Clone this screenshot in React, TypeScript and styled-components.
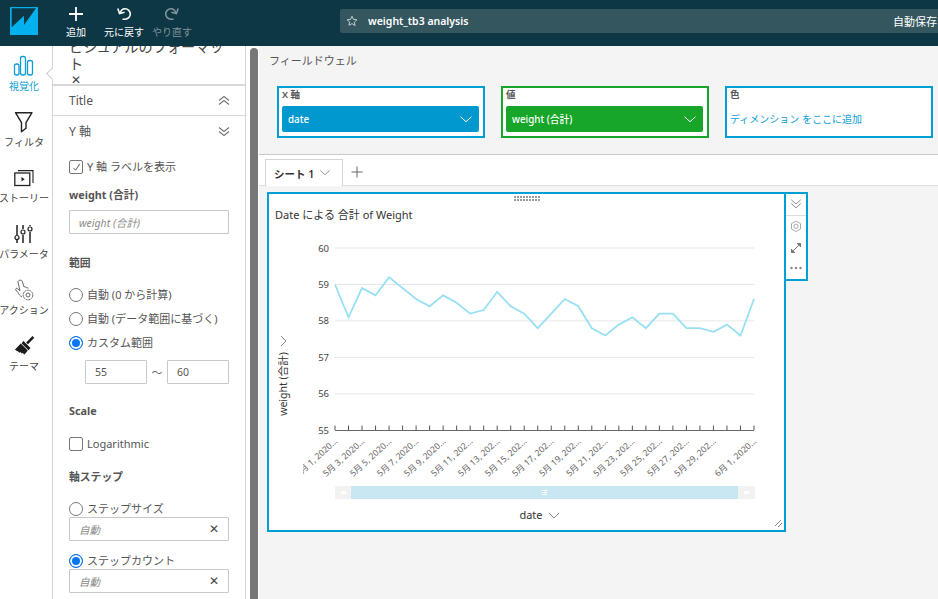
import React from "react";
import styled, { createGlobalStyle } from "styled-components";

const Global = createGlobalStyle`
  html, body { margin: 0; padding: 0; height: 100%; overflow: hidden; background: #fff; }
  #root { height: 100%; }
  * { box-sizing: border-box; }
  body { font-family: "Noto Sans", "Noto Sans CJK JP", sans-serif; color: #555; }
`;

const Page = styled.div`
  width: 938px;
  height: 599px;
  display: flex;
  flex-direction: column;
  overflow: hidden;
`;

/* ---------- top bar ---------- */
const TopBar = styled.header`
  flex: 0 0 46px;
  height: 46px;
  background: #0e3745;
  display: flex;
  align-items: flex-start;
  position: relative;
  z-index: 2;
`;
const Logo = styled.svg`
  width: 28px;
  height: 28px;
  margin: 7px 14px 0 10px;
  flex: none;
`;
const ToolGroup = styled.div`
  display: flex;
  flex: none;
`;
const ToolButton = styled.button<{ $off?: boolean }>`
  all: unset;
  box-sizing: border-box;
  width: 48px;
  height: 46px;
  display: flex;
  flex-direction: column;
  align-items: center;
  padding-top: 5px;
  color: ${(p) => (p.$off ? "#7f959c" : "#fff")};
  font-size: 10px;
  line-height: 14px;
  white-space: nowrap;
  svg { display: block; margin-bottom: 2px; }
`;
const TitleBar = styled.div`
  margin: 9px 0 0 144px;
  width: 598px;
  height: 24px;
  background: #33565f;
  border-radius: 2px 0 0 2px;
  display: flex;
  align-items: center;
  padding-left: 6px;
  color: #fff;
`;
const TitleName = styled.span`
  margin-left: 10px;
  flex: 1;
  font-size: 10.5px;
  font-weight: 600;
`;
const SaveState = styled.span`
  flex: 0 0 45px;
  font-size: 11px;
  white-space: nowrap;
  overflow: hidden;
`;

/* ---------- work area ---------- */
const Work = styled.div`
  flex: 1;
  display: flex;
  min-height: 0;
`;
const Rail = styled.nav`
  flex: 0 0 52px;
  padding: 8px 4px 0 0;
  position: relative;
  z-index: 1;
`;
const RailItem = styled.div<{ $active?: boolean }>`
  width: 48px;
  height: 56px;
  display: flex;
  flex-direction: column;
  align-items: center;
  position: relative;
  color: ${(p) => (p.$active ? "#0d9ed6" : "#444")};
  ${(p) =>
    p.$active
      ? `&::after {
          content: "";
          position: absolute;
          left: 48px;
          top: 15px;
          width: 8px;
          height: 8px;
          background: #fff;
          border-left: 1px solid #ccc;
          border-bottom: 1px solid #ccc;
          transform: rotate(45deg);
        }`
      : ""}
`;
const RailIcon = styled.svg`
  width: 48px;
  height: 24px;
  flex: none;
`;
const RailLabel = styled.span`
  margin-top: 1px;
  font-size: 10px;
  line-height: 14px;
  white-space: nowrap;
`;

const Panel = styled.aside`
  flex: 0 0 194px;
  border-left: 1px solid #d5d5d5;
  border-right: 1px solid #d5d5d5;
  overflow: hidden;
  background: #fff;
`;
const PanelHead = styled.div`
  margin-top: -8px;
  padding: 0 16px;
  height: 46px;
  font-size: 14.2px;
  line-height: 17px;
  color: #444;
`;
const PanelClose = styled.div`
  font-size: 12px;
  line-height: 17px;
  margin-top: -1px;
  padding-left: 2px;
`;
const SectionRow = styled.div<{ $h: number; $line?: boolean }>`
  height: ${(p) => p.$h}px;
  padding: 0 15px 0 16px;
  display: flex;
  align-items: center;
  justify-content: space-between;
  font-size: 12px;
  color: #555;
  ${(p) => (p.$line ? "border-top: 2px solid #d8d8d8; border-bottom: 1px solid #d8d8d8;" : "")}
`;
const Form = styled.div`
  padding: 0 16px;
`;
const FormLabel = styled.div<{ $top: number }>`
  margin-top: ${(p) => p.$top}px;
  height: 16px;
  line-height: 16px;
  font-size: 10.8px;
  font-weight: 700;
  color: #555;
`;
const OptionRow = styled.label<{ $top: number }>`
  margin-top: ${(p) => p.$top}px;
  height: 14px;
  display: flex;
  align-items: center;
  gap: 4px;
  font-size: 11px;
  line-height: 14px;
  white-space: nowrap;
  color: #555;
`;
const CheckBox = styled.span`
  width: 14px;
  height: 14px;
  flex: none;
  border: 1px solid #777;
  border-radius: 2px;
  display: flex;
  align-items: center;
  justify-content: center;
`;
const Radio = styled.span<{ $on?: boolean }>`
  width: 14px;
  height: 14px;
  flex: none;
  border-radius: 50%;
  border: 1px solid ${(p) => (p.$on ? "#0073e6" : "#777")};
  background: ${(p) => (p.$on ? "#0a76f0" : "#fff")};
  box-shadow: ${(p) => (p.$on ? "inset 0 0 0 2px #fff" : "none")};
`;
const TextBox = styled.div<{ $top: number; $w?: number; $muted?: boolean }>`
  margin-top: ${(p) => p.$top}px;
  width: ${(p) => p.$w ?? 160}px;
  height: 24px;
  border: 1px solid #c8c8c8;
  border-radius: 1px;
  display: flex;
  align-items: center;
  justify-content: space-between;
  padding: 0 9px;
  font-size: 10.5px;
  color: ${(p) => (p.$muted ? "#8a8a8a" : "#555")};
  font-style: ${(p) => (p.$muted ? "italic" : "normal")};
`;
const RangeRow = styled.div`
  margin-top: 10px;
  padding-left: 16px;
  display: flex;
  align-items: center;
  font-size: 11px;
`;
const Tilde = styled.span`
  width: 20px;
  text-align: center;
  color: #666;
`;
const ClearMark = styled.span`
  font-style: normal;
  color: #444;
  font-size: 12px;
  line-height: 1;
`;

const Gutter = styled.div`
  flex: 0 0 13px;
  background: #fff;
  padding: 2px 1px 0 4px;
`;
const Thumb = styled.div`
  height: 100%;
  background: #777;
  border-radius: 5px 5px 0 0;
`;

/* ---------- main ---------- */
const Main = styled.main`
  flex: 1;
  min-width: 0;
  background: #f4f4f4;
  display: flex;
  flex-direction: column;
  overflow: hidden;
`;
const WellTitle = styled.div`
  height: 40px;
  flex: none;
  padding: 6px 0 0 10px;
  font-size: 11px;
  line-height: 17px;
  color: #555;
`;
const Wells = styled.div`
  display: flex;
  gap: 16px;
  padding-left: 18px;
  height: 68px;
  flex: none;
`;
const Well = styled.div<{ $color: string }>`
  width: 208px;
  height: 52px;
  border: 2px solid ${(p) => p.$color};
  background: #fff;
  padding: 0 4px 0 3px;
`;
const WellLabel = styled.div`
  height: 18px;
  line-height: 14px;
  font-size: 9.5px;
  font-weight: 600;
  color: #555;
`;
const FieldPill = styled.div<{ $color: string }>`
  height: 26px;
  background: ${(p) => p.$color};
  border-radius: 2px;
  color: #fff;
  font-size: 9.8px;
  font-weight: 500;
  display: flex;
  align-items: center;
  justify-content: space-between;
  padding: 0 6px;
`;
const WellHint = styled.div`
  font-size: 10px;
  line-height: 26px;
  color: #0d9ed6;
  white-space: nowrap;
`;
const TabStrip = styled.div`
  flex: 0 0 32px;
  background: #fff;
  border-top: 1px solid #c9c9c9;
  border-bottom: 1px solid #ddd;
  display: flex;
  align-items: flex-end;
  padding-left: 6px;
`;
const Tab = styled.div`
  width: 78px;
  height: 27px;
  margin-bottom: -1px;
  background: #fff;
  border: 1px solid #d5d5d5;
  border-bottom: 0;
  display: flex;
  align-items: center;
  gap: 5px;
  padding-left: 8px;
  font-size: 10.5px;
  font-weight: 600;
  color: #333;
`;
const AddTab = styled.svg`
  width: 12px;
  height: 12px;
  margin: 0 0 7px 8px;
`;
const Canvas = styled.div`
  flex: 1;
  padding: 6px 0 0 8px;
  display: flex;
  align-items: flex-start;
`;
const Card = styled.section`
  width: 519px;
  height: 340px;
  border: 2px solid #009fd4;
  background: #fff;
  display: flex;
  flex-direction: column;
  align-items: stretch;
  flex: none;
`;
const DragHandle = styled.svg`
  width: 26px;
  height: 6px;
  margin: 2px auto 0;
  flex: none;
`;
const CardTitle = styled.div`
  margin-top: 5px;
  height: 16px;
  line-height: 16px;
  padding-left: 6px;
  font-size: 11px;
  color: #333;
  flex: none;
`;
const ChartSvg = styled.svg`
  display: block;
  width: 515px;
  height: 307px;
  flex: none;
`;
const SideTools = styled.div`
  width: 22px;
  height: 89px;
  border: 2px solid #009fd4;
  border-left: 0;
  background: #fff;
  flex: none;
  display: flex;
  flex-direction: column;
`;
const SideTool = styled.svg<{ $line?: boolean }>`
  width: 20px;
  height: ${(p) => (p.$line ? 22 : 21)}px;
  flex: none;
  ${(p) => (p.$line ? "border-bottom: 1px solid #ddd;" : "")}
`;

/* ---------- data ---------- */
const values = [
  59, 58.1, 58.9, 58.7, 59.2, 58.9, 58.6, 58.4, 58.7, 58.5, 58.2, 58.3, 58.8, 58.4, 58.2, 57.8,
  58.2, 58.6, 58.4, 57.8, 57.6, 57.9, 58.1, 57.8, 58.2, 58.2, 57.8, 57.8, 57.7, 57.9, 57.6, 58.6,
];
const px = (i: number) => 335 + i * (419 / 31);
const py = (v: number) => 430.3 - (v - 55) * 36.46;
const linePoints = values.map((v, i) => `${px(i).toFixed(1)},${py(v).toFixed(1)}`).join(" ");
const tickLabels: [number, string][] = [
  [0, "5月 1, 2020..."],
  [2, "5月 3, 2020..."],
  [4, "5月 5, 2020..."],
  [6, "5月 7, 2020..."],
  [8, "5月 9, 2020..."],
  [10, "5月 11, 202..."],
  [12, "5月 13, 202..."],
  [14, "5月 15, 202..."],
  [16, "5月 17, 202..."],
  [18, "5月 19, 202..."],
  [20, "5月 21, 202..."],
  [22, "5月 23, 202..."],
  [24, "5月 25, 202..."],
  [26, "5月 27, 202..."],
  [28, "5月 29, 202..."],
  [31, "6月 1, 2020..."],
];

const Chev = ({ color = "#fff", size = 14 }: { color?: string; size?: number }) => (
  <svg width={size} height={size * 0.6} viewBox="0 0 14 8" fill="none" stroke={color} strokeWidth="1">
    <path d="M1.5 1.5 7 6.5l5.5-5" />
  </svg>
);
const DoubleChev = ({ up }: { up?: boolean }) => (
  <svg width="12" height="11" viewBox="0 0 12 11" fill="none" stroke="#777" strokeWidth="1.1">
    {up ? <path d="M1 5.5 6 1.5l5 4M1 9.5l5-4 5 4" /> : <path d="M1 1.5l5 4 5-4M1 5.5l5 4 5-4" />}
  </svg>
);

export default function App() {
  return (
    <>
      <Global />
      <Page>
        <TopBar>
          <Logo viewBox="0 0 28 28">
            <rect width="28" height="28" fill="#02b1ee" />
            <path d="M1.7 1.3H26L14 18V8.7L1.7 20.3z" fill="#0e3745" />
          </Logo>
          <ToolGroup>
            <ToolButton>
              <svg width="18" height="18" viewBox="0 0 18 18" stroke="#fff" strokeWidth="1.8" fill="none">
                <path d="M9 2v14M2 9h14" />
              </svg>
              追加
            </ToolButton>
            <ToolButton>
              <svg width="18" height="18" viewBox="0 0 18 18" stroke="#fff" strokeWidth="1.6" fill="none">
                <path d="M5 8.5C6 5 8 3.8 10 3.8c3 0 5.3 2.4 5.3 5.2s-2.3 5.2-5.3 5.2H7.5" />
                <path d="M2.8 3.5 4.6 8.6l5-1.4" />
              </svg>
              元に戻す
            </ToolButton>
            <ToolButton $off>
              <svg width="18" height="18" viewBox="0 0 18 18" stroke="#7f959c" strokeWidth="1.6" fill="none">
                <path d="M13 8.5C12 5 10 3.8 8 3.8c-3 0-5.3 2.4-5.3 5.2s2.3 5.2 5.3 5.2h2.5" />
                <path d="M15.2 3.5 13.4 8.6l-5-1.4" />
              </svg>
              やり直す
            </ToolButton>
          </ToolGroup>
          <TitleBar>
            <svg width="12" height="12" viewBox="0 0 24 24" fill="none" stroke="#cfd8da" strokeWidth="1.8">
              <path d="M12 2.5l2.9 6.3 6.9.8-5.1 4.7 1.4 6.8L12 17.2 5.9 20.6l1.4-6.8L2.2 9.6l6.9-.8z" />
            </svg>
            <TitleName>weight_tb3 analysis</TitleName>
            <SaveState>自動保存オン</SaveState>
          </TitleBar>
        </TopBar>
        <Work>
          <Rail>
            <RailItem $active>
              <RailIcon viewBox="0 54 48 24" fill="none" stroke="#0d9ed6" strokeWidth="1.3">
                <rect x="14.5" y="64" width="4.5" height="11" rx="2" />
                <rect x="20.5" y="56.5" width="5" height="18.5" rx="2" />
                <rect x="27.5" y="60.5" width="5" height="14.5" rx="2" />
              </RailIcon>
              <RailLabel>視覚化</RailLabel>
            </RailItem>
            <RailItem>
              <RailIcon viewBox="0 110 48 24" fill="none" stroke="#222" strokeWidth="1.4">
                <path d="M15.5 112.7h16.5l-6 10v5.5l-4.5 3.5v-9z" strokeLinejoin="round" />
              </RailIcon>
              <RailLabel>フィルタ</RailLabel>
            </RailItem>
            <RailItem>
              <RailIcon viewBox="0 166 48 24" fill="none" stroke="#222" strokeWidth="1.1">
                <path d="M18 170.6h15v12.4" />
                <rect x="14.8" y="173" width="15" height="12.5" strokeWidth="1.3" />
                <path d="M21.5 177l3.2 2.2-3.2 2.2z" fill="#222" stroke="none" />
              </RailIcon>
              <RailLabel>ストーリー</RailLabel>
            </RailItem>
            <RailItem>
              <RailIcon viewBox="0 222 48 24" fill="none" stroke="#222" strokeWidth="1.5">
                <path d="M17 225v10m0 5v3M23 225v4m0 6v8M30 225v1m0 6v11" />
                <circle cx="17" cy="237.5" r="2" strokeWidth="1.2" />
                <circle cx="23" cy="232" r="2" strokeWidth="1.2" />
                <circle cx="30" cy="229" r="2" strokeWidth="1.2" />
              </RailIcon>
              <RailLabel>パラメータ</RailLabel>
            </RailItem>
            <RailItem>
              <RailIcon viewBox="0 278 48 24" fill="none" stroke="#555" strokeWidth="0.9">
                <path d="M20 280.5c1-.8 2 0 2.3 1l1.8 5.5c1-.6 2 0 2.2.7 1-.3 1.8.2 2 .9M22 297c-2-1-3.5-3-4-4.5l-2.2-2.5c-.6-1.3.8-2.2 1.8-1.3l2.4 2-2-8.5c-.2-.8.5-1.400 2-2.2" />
                <circle cx="28" cy="295" r="4.8" strokeDasharray="2 .6" />
                <circle cx="28" cy="295" r="2" />
              </RailIcon>
              <RailLabel>アクション</RailLabel>
            </RailItem>
            <RailItem>
              <RailIcon viewBox="0 334 48 24" fill="#1c1c1c" stroke="none">
                <path d="M32.5 336l1.8 1.8-6.3 6.5-1.9-1.9z" />
                <path d="M23.5 341l7 7-2 2.2-7-7z" />
                <path d="M20.8 343.5l7 7-3.2 4-2-1.5-.8.6-1.5-1.5-1 .6-1.5-1.5-1-.2-1.8-1.500z" />
              </RailIcon>
              <RailLabel>テーマ</RailLabel>
            </RailItem>
          </Rail>
          <Panel>
            <PanelHead>
              ビジュアルのフォーマット
              <PanelClose>✕</PanelClose>
            </PanelHead>
            <SectionRow $h={32} $line>
              Title
              <DoubleChev up />
            </SectionRow>
            <SectionRow $h={30}>
              Y 軸
              <DoubleChev />
            </SectionRow>
            <Form>
              <OptionRow $top={14}>
                <CheckBox>
                  <svg width="9" height="9" viewBox="0 0 10 10" fill="none" stroke="#555" strokeWidth="1.1">
                    <path d="M1.5 5.5 4 8l4.5-7" />
                  </svg>
                </CheckBox>
                Y 軸 ラベルを表示
              </OptionRow>
              <FormLabel $top={13}>weight (合計)</FormLabel>
              <TextBox $top={7} $muted>weight (合計)</TextBox>
              <FormLabel $top={21}>範囲</FormLabel>
              <OptionRow $top={17}><Radio />自動 (0 から計算)</OptionRow>
              <OptionRow $top={10}><Radio />自動 (データ範囲に基づく)</OptionRow>
              <OptionRow $top={10}><Radio $on />カスタム範囲</OptionRow>
              <RangeRow>
                <TextBox $top={0} $w={62}>55</TextBox>
                <Tilde>〜</Tilde>
                <TextBox $top={0} $w={62}>60</TextBox>
              </RangeRow>
              <FormLabel $top={19}>Scale</FormLabel>
              <OptionRow $top={18}><CheckBox />Logarithmic</OptionRow>
              <FormLabel $top={18}>軸ステップ</FormLabel>
              <OptionRow $top={17}><Radio />ステップサイズ</OptionRow>
              <TextBox $top={1} $muted>自動<ClearMark>✕</ClearMark></TextBox>
              <OptionRow $top={13}><Radio $on />ステップカウント</OptionRow>
              <TextBox $top={1} $muted>自動<ClearMark>✕</ClearMark></TextBox>
            </Form>
          </Panel>
          <Gutter><Thumb /></Gutter>
          <Main>
            <WellTitle>フィールドウェル</WellTitle>
            <Wells>
              <Well $color="#009fd4">
                <WellLabel>X 軸</WellLabel>
                <FieldPill $color="#0098cf">date<Chev /></FieldPill>
              </Well>
              <Well $color="#17a629">
                <WellLabel>値</WellLabel>
                <FieldPill $color="#17a629">weight (合計)<Chev /></FieldPill>
              </Well>
              <Well $color="#009fd4">
                <WellLabel>色</WellLabel>
                <WellHint>ディメンション をここに追加</WellHint>
              </Well>
            </Wells>
            <TabStrip>
              <Tab>シート 1<Chev color="#888" size={12} /></Tab>
              <AddTab viewBox="0 0 12 12" stroke="#666" fill="none" strokeWidth="1">
                <path d="M6 .5v11M.5 6h11" />
              </AddTab>
            </TabStrip>
            <Canvas>
              <Card>
                <DragHandle viewBox="0 0 26 6" fill="#999">
                  {[0, 1, 2, 3, 4, 5, 6, 7, 8].map((i) => (
                    <g key={i}>
                      <rect x={i * 3} y="0" width="2" height="2" />
                      <rect x={i * 3} y="3" width="2" height="2" />
                    </g>
                  ))}
                </DragHandle>
                <CardTitle>Date による 合計 of Weight</CardTitle>
                <ChartSvg viewBox="269 223 515 307" fontFamily='"Noto Sans","Noto Sans CJK JP",sans-serif'>
                  <defs>
                    <clipPath id="labelClip">
                      <rect x="303" y="432" width="470" height="50" />
                    </clipPath>
                  </defs>
                  {[60, 59, 58, 57, 56].map((v) => (
                    <line key={v} x1="335" x2="754" y1={py(v)} y2={py(v)} stroke="#e6e6e6" strokeWidth="1" />
                  ))}
                  {[60, 59, 58, 57, 56, 55].map((v) => (
                    <text key={v} x="329" y={py(v) + 3.5} textAnchor="end" fontSize="9.5" fill="#444">
                      {v}
                    </text>
                  ))}
                  <line x1="335" x2="754" y1="430.5" y2="430.5" stroke="#666" strokeWidth="1" />
                  {values.map((_, i) => (
                    <line key={i} x1={px(i)} x2={px(i)} y1="425.5" y2="430" stroke="#555" strokeWidth="1" />
                  ))}
                  <polyline points={linePoints} fill="none" stroke="#97e0f3" strokeWidth="1.8" />
                  <g clipPath="url(#labelClip)">
                    {tickLabels.map(([i, t]) => (
                      <text
                        key={i}
                        transform={`translate(${px(i) + 3} 442) rotate(-42)`}
                        textAnchor="end"
                        fontSize="8.7"
                        fill="#666"
                      >
                        {t}
                      </text>
                    ))}
                  </g>
                  <path d="M281 336l5 5-5 5" fill="none" stroke="#888" strokeWidth="1" />
                  <text
                    transform="translate(286.5 384) rotate(-90)"
                    textAnchor="middle"
                    fontSize="10.5"
                    fill="#333"
                  >
                    weight (合計)
                  </text>
                  <rect x="335" y="486" width="420" height="13" fill="#f2f2f2" />
                  <rect x="351" y="486" width="387" height="13" fill="#c9e7f3" />
                  <rect x="341" y="491" width="5" height="3" fill="#fff" />
                  <rect x="744" y="491" width="5" height="3" fill="#fff" />
                  <g fill="#fff">
                    <rect x="542" y="490" width="5" height="1" />
                    <rect x="542" y="492" width="5" height="1" />
                    <rect x="542" y="494" width="5" height="1" />
                  </g>
                  <text x="531" y="519" textAnchor="middle" fontSize="11" fill="#333">
                    date
                  </text>
                  <path d="M549 513l5 5 5-5" fill="none" stroke="#888" strokeWidth="1" />
                  <path d="M775 526l6-6M778 527l4-4" stroke="#888" strokeWidth="1" />
                </ChartSvg>
              </Card>
              <SideTools>
                <SideTool $line viewBox="0 0 20 22" fill="none" stroke="#888" strokeWidth="1">
                  <path d="M5 6l5 4.5L15 6M5 10l5 4.5 5-4.5" />
                </SideTool>
                <SideTool viewBox="0 0 20 21" fill="none" stroke="#aaa" strokeWidth="1">
                  <path d="M10 5l4.5 2.6v5.300L10 15.500l-4.500-2.600V7.600z" />
                  <circle cx="10" cy="10.3" r="2.2" />
                </SideTool>
                <SideTool viewBox="0 0 20 21" fill="none" stroke="#777" strokeWidth="1">
                  <path d="M6 15l8-8" />
                  <path d="M11 6.5h3.5V10M9 15.5H5.5V12" fill="#777" />
                </SideTool>
                <SideTool viewBox="0 0 20 21" fill="#888">
                  <circle cx="5.5" cy="10" r="1.2" />
                  <circle cx="10" cy="10" r="1.2" />
                  <circle cx="14.5" cy="10" r="1.2" />
                </SideTool>
              </SideTools>
            </Canvas>
          </Main>
        </Work>
      </Page>
    </>
  );
}
